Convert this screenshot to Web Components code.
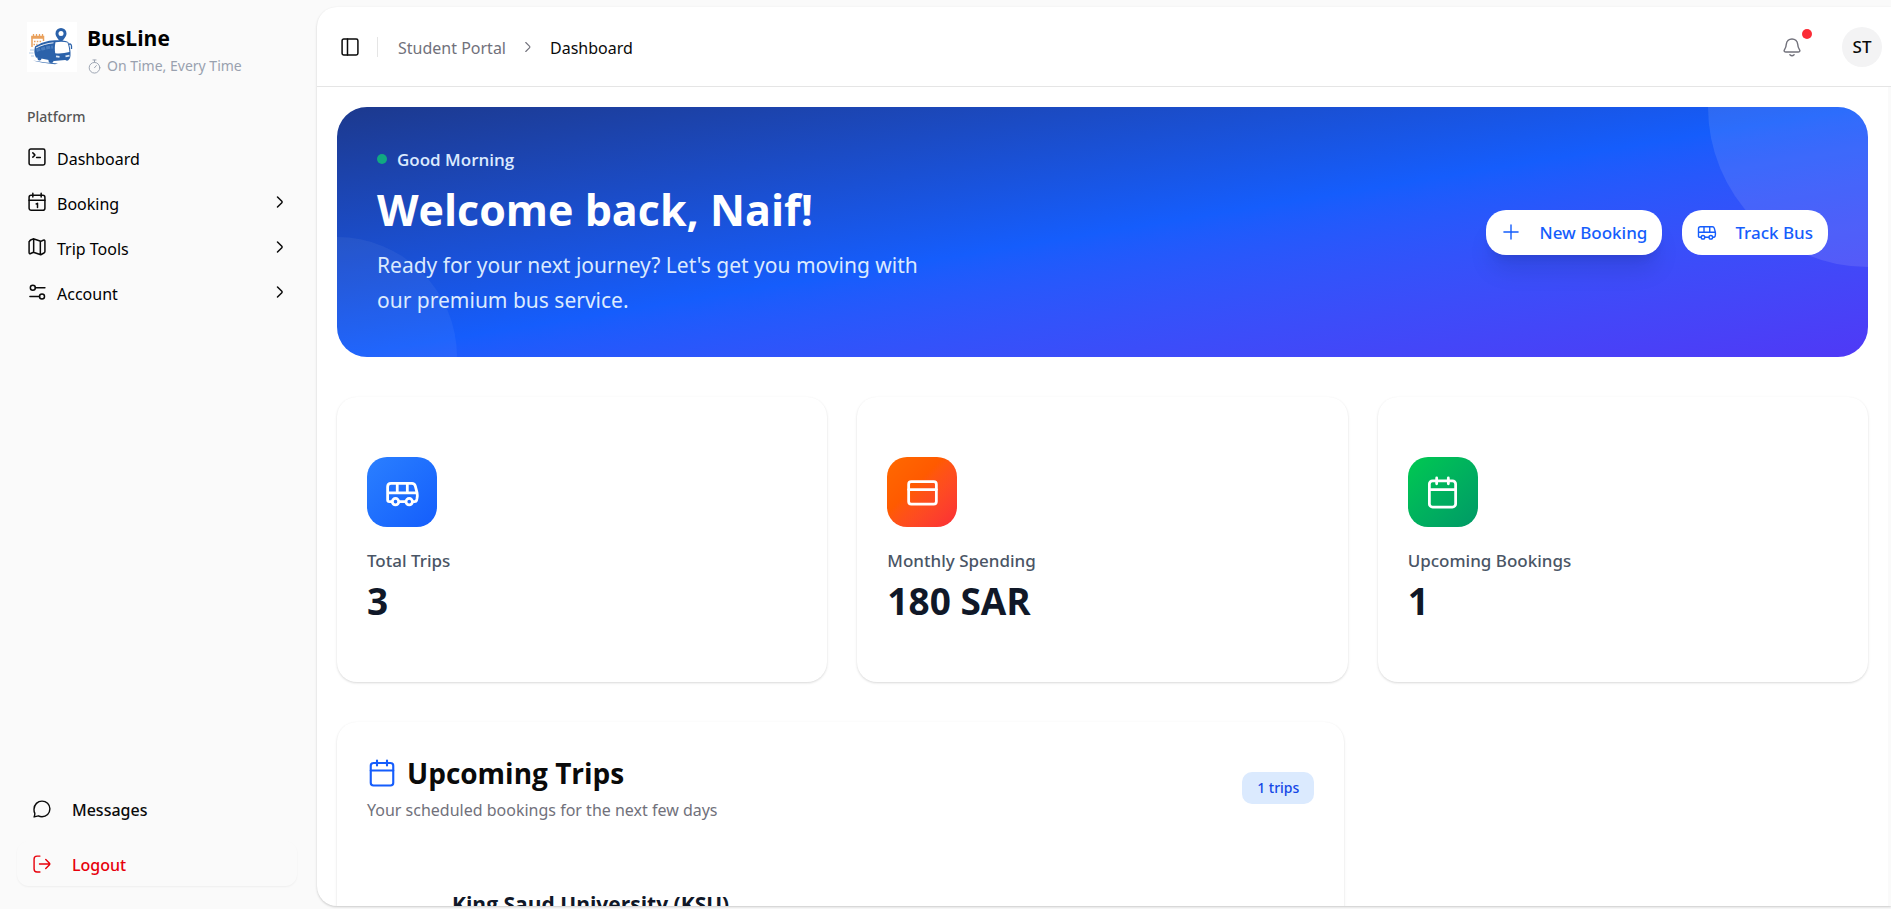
<!DOCTYPE html>
<html lang="en">
<head>
<meta charset="utf-8">
<title>BusLine – Dashboard</title>
<style>
  html, body { margin: 0; height: 100%; }
  body {
    background: #fafafa;
    color: #0a0a0a;
    font: 400 16px/24px "Noto Sans", "Open Sans", sans-serif;
    --medium: "Noto Sans", "Open Sans", sans-serif;
    --strong: "Open Sans", "Noto Sans", sans-serif;
    overflow: hidden;
  }
</style>
</head>
<body>
<bus-app>
  <bus-sidebar slot="sidebar">
    <bus-brand slot="brand" tagline="On Time, Every Time">BusLine</bus-brand>
    <nav-item icon="terminal">Dashboard</nav-item>
    <nav-item icon="calendarDay" expandable>Booking</nav-item>
    <nav-item icon="map" expandable>Trip Tools</nav-item>
    <nav-item icon="sliders" expandable>Account</nav-item>
    <side-action slot="footer" icon="chat">Messages</side-action>
    <side-action slot="footer" icon="logout" danger>Logout</side-action>
  </bus-sidebar>
  <bus-topbar slot="topbar" parent="Student Portal" page="Dashboard" initials="ST"></bus-topbar>
  <welcome-banner>
    <span slot="greeting">Good Morning</span>
    <span slot="title">Welcome back, Naif!</span>
    <span slot="text">Ready for your next journey? Let's get you moving with our premium bus service.</span>
    <pill-button slot="actions" icon="plus" raised>New Booking</pill-button>
    <pill-button slot="actions" icon="bus">Track Bus</pill-button>
  </welcome-banner>
  <stat-grid>
    <stat-card icon="bus" tone="blue" label="Total Trips">3</stat-card>
    <stat-card icon="card" tone="orange" label="Monthly Spending">180 SAR</stat-card>
    <stat-card icon="calendar" tone="green" label="Upcoming Bookings">1</stat-card>
  </stat-grid>
  <trips-card>
    <span slot="title">Upcoming Trips</span>
    <span slot="text">Your scheduled bookings for the next few days</span>
    <span slot="badge">1 trips</span>
    <trip-row>King Saud University (KSU)</trip-row>
  </trips-card>
</bus-app>

<script>
const ICONS = {
  terminal: '<rect x="2.5" y="2.5" width="19" height="19" rx="2"/><path d="M7 7l2.2 2.1c.5.5.5.6 0 1.1L7 12.200M11.500 12.500H16"/>',
  calendarDay: '<rect x="2.500" y="4" width="19" height="18" rx="2.500"/><path d="M2.500 10h19M7 1.500V6M17 1.500V6M11 14.300c.8-.2 1.200-.5 1.600-.8V18.500"/>',
  calendar: '<rect x="3" y="4" width="18" height="18" rx="2.200"/><path d="M3 10h18M8 2v4M16 2v4"/>',
  map: '<path d="M3 5.500c0-1 .5-1.400 1.400-1.900L7.500 2.200l9 3 3-1.300c1.300-.5 2-.1 2 1.200v12.200c0 1-.4 1.500-1.200 1.900l-3.800 2.100-8.800-3-3.300 1.500c-1.200.6-1.900.1-1.900-1.200V5.500zM8 2.500v15.500M16 5.300V21"/>',
  sliders: '<circle cx="7" cy="7" r="3"/><circle cx="18" cy="17.500" r="3"/><path d="M10 7h11.500M3.500 17.500H15"/>',
  chevron: '<path d="M9 6l5.200 5.200c.6.6.6 1 0 1.600L9 18"/>',
  chat: '<path d="M2.500 21.500c.6-1.400 1-2.700.9-4.200-.7-1.500-1.100-3.200-1-5.100C2.600 6.600 6.800 2.500 12 2.500s9.500 4.200 9.500 9.300c0 5.300-4.200 9.400-9.500 9.400-1.600 0-3-.3-4.300-1-1.800.2-3.400.6-5.200 1.300z"/>',
  logout: '<path d="M9.500 2.500H6C3.500 2.500 2.500 3.600 2.500 6v12c0 2.400 1 3.500 3.500 3.500h3.500M9 12h12.500M16.500 6.500l4.500 4.700c.5.500.5 1.100 0 1.600l-4.500 4.700"/>',
  panel: '<rect x="2.500" y="2.500" width="19" height="19" rx="2"/><path d="M9 2.500v19"/>',
  bell: '<path d="M4.700 18h14.600c1.700 0 2.700-1.200 1.800-2.600-1.500-2.100-2.100-3-2.300-6.900C18.500 4.700 15.500 2.300 12 2.300S5.500 4.700 5.200 8.500c-.2 3.900-.8 4.800-2.300 6.900C2 16.800 3 18 4.700 18zM9.500 21.300c1.300 1.200 3.700 1.200 5 0"/>',
  plus: '<path d="M12 3.500v17M3.500 12h17"/>',
  bus: '<path d="M4.700 18.300H3c-.9 0-1.200-.3-1.200-1.200V8c0-1.700.6-2.300 2.300-2.300h14.400c1.400 0 1.900.5 2.300 1.900l1.200 4.600c.3 1.500.2 2.600-.1 4.100l-.3 1.200c-.2.600-.5.800-1.100.8h-1.400M9.700 18.300h4.400M1.800 12.200h20.200M8.400 5.700v6.500M15.300 5.700v6.500"/><circle cx="7.200" cy="18.300" r="2.200"/><circle cx="16.600" cy="18.300" r="2.200"/>',
  card: '<rect x="2.500" y="4.500" width="19" height="15.500" rx="1.800"/><path d="M2.500 10h19"/>',
  timer: '<circle cx="12" cy="14" r="8.500"/><path d="M12 14l3-3.500M9.500 1.500h5M12 2v3"/>'
};

const icon = (name, size, weight = 1.5) =>
  `<svg width="${size}" height="${size}" viewBox="0 0 24 24" fill="none" stroke="currentColor" stroke-width="${weight}" stroke-linecap="round" stroke-linejoin="round" aria-hidden="true">${ICONS[name]}</svg>`;

const define = (tag, render) => customElements.define(tag, class extends HTMLElement {
  connectedCallback() {
    if (this.shadowRoot) return;
    const root = this.attachShadow({ mode: 'open' });
    root.innerHTML = '<style>*{box-sizing:border-box}svg{display:block;flex:none}button,a{font:inherit;color:inherit;text-decoration:none}</style>' + render(this);
  }
});

define('bus-app', () => `
<style>
  :host { display: grid; grid-template-columns: 317px minmax(0, 1fr); height: 100vh; }
  .panel { margin: 7px 0 3px; background: #fff; border-radius: 20px 0 0 20px; overflow: hidden;
    display: flex; flex-direction: column; min-height: 0;
    box-shadow: 0 1px 3px rgba(0,0,0,.1), 0 1px 2px rgba(0,0,0,.1); }
  .scroll { flex: 1; min-height: 0; overflow: hidden; padding: 20px; border-right: 3px solid #fafafa;
    display: flex; flex-direction: column; gap: 40px; }
  ::slotted(*) { flex: none; }
</style>
<slot name="sidebar"></slot>
<main class="panel">
  <slot name="topbar"></slot>
  <div class="scroll"><slot></slot></div>
</main>`);

define('bus-sidebar', () => `
<style>
  :host { display: flex; flex-direction: column; padding: 22px 20px 23px 17px; box-sizing: border-box; min-height: 0; }
  .label { font: 500 14px/40px var(--medium); color: #555; padding-left: 10px; margin-top: 25px; }
  nav { display: flex; flex-direction: column; gap: 5px; }
  .foot { margin-top: auto; display: flex; flex-direction: column; gap: 10px; }
</style>
<slot name="brand"></slot>
<div class="label">Platform</div>
<nav aria-label="Platform"><slot></slot></nav>
<div class="foot"><slot name="footer"></slot></div>`);

define('bus-brand', el => `
<style>
  :host { display: flex; gap: 10px; height: 50px; padding-left: 10px; }
  .logo { width: 50px; height: 50px; background: #fff; }
  .name { font: 700 21px/32px var(--strong); color: #000; }
  .tag { display: flex; align-items: center; gap: 5px; font-size: 14px; line-height: 24px; color: #99a1af; }
</style>
<svg class="logo" viewBox="0 0 50 50" aria-hidden="true">
  <g stroke="#e9a15c" fill="none">
    <path d="M5 25V14.500h11.500V19" stroke-width="1.500"/><path d="M4.500 15.500h12" stroke-width="2.500"/>
    <path d="M6.500 12v3M9.500 12v3M12.500 12v3M15.500 12v3" stroke-width="1.300"/>
    <path d="M7 19.500h8M6.500 22.500h4" stroke-width="1.500" stroke-dasharray="1.500 1.300"/>
  </g>
  <g fill="#2b62aa">
    <path d="M34 21c-2-3.500-5.500-6-5.500-9.500a5.500 5.500 0 0 1 11 0c0 3.500-3.500 6-5.500 9.500z"/>
    <path d="M8 24.500C13 21 20 18.500 28 18.200c5-.2 11.500.3 13.200 1.800 1.800 4.200 2.600 9 2.300 13.500-.2 2.800-.9 4-2.500 4.300L27 39 9 35.500C7 32 7 28 8 24.500z"/>
    <circle cx="12.500" cy="36.500" r="2"/><circle cx="24" cy="38.500" r="2.500"/><circle cx="40" cy="37" r="1.800"/>
    <path d="M6 38.500c8 1.500 17 2.500 25 3l-3 .8C20 41.500 12 40.300 6 38.500z"/>
  </g>
  <path d="M41.500 22.500c1.500-1 2.800-.5 3 1.500v3" fill="none" stroke="#2b62aa" stroke-width="1.300"/>
  <circle cx="34" cy="11.500" r="2.500" fill="#fff"/>
  <path d="M28.500 20.200c4-.8 8.500-.8 12 .3 1 2.800 1.700 6 1.900 9.500-4.700 1.300-9.800 1.700-14.200 1.200-.6-3.700-.5-7.200.3-11z" fill="#fff"/>
  <path d="M9 26c5-2.800 11.500-4.700 17.500-5.200" fill="none" stroke="#fff" stroke-width=".9"/>
  <path d="M9.500 28.500c5-1.700 11-3 16.500-3.500" fill="none" stroke="#4b7dbd" stroke-width="3" stroke-dasharray="4 1"/>
  <path d="M29 34.300l3.500.5M38.500 34.300l4-.7" stroke="#dce8f6" stroke-width="1.800"/>
  <path d="M3 28h4M2 31h4.500M4 34h3" stroke="#9dbde0" stroke-width=".8"/>
</svg>
<div>
  <div class="name"><slot></slot></div>
  <div class="tag">${icon('timer', 15)}<span>${el.getAttribute('tagline')}</span></div>
</div>`);

define('nav-item', el => `
<style>
  :host { display: block; }
  a { display: flex; align-items: center; height: 40px; padding: 0 7px 0 10px; }
  .text { flex: 1; padding: 3px 0 0 10px; color: #000; }
</style>
<a href="#">${icon(el.getAttribute('icon'), 20, 1.8)}<span class="text"><slot></slot></span>${el.hasAttribute('expandable') ? icon('chevron', 20, 1.8) : ''}</a>`);

define('side-action', el => `
<style>
  :host { display: block; }
  button { display: flex; align-items: center; gap: 20px; width: 100%; height: 45px; padding: 0 15px;
    border: 0; border-radius: 12px; background: none; font: 500 16px/24px var(--medium); text-align: left; }
  .text { padding-top: 2px; }
  :host([danger]) button { color: #e7000b; box-shadow: 0 1px 2px rgba(0,0,0,.05); }
</style>
<button type="button">${icon(el.getAttribute('icon'), 20, 1.7)}<span class="text"><slot></slot></span></button>`);

define('bus-topbar', el => `
<style>
  :host { display: flex; align-items: center; height: 80px; padding: 0 9px 0 20px; box-sizing: border-box; border-bottom: 1px solid #e5e5e5; }
  button { border: 0; background: none; padding: 0; }
  .toggle { padding: 3px; }
  .rule { width: 1px; height: 20px; background: #e5e5e5; margin: 0 20px 0 14px; }
  ol { display: flex; align-items: center; gap: 13px; margin: 0; padding: 0; list-style: none; flex: 1; color: #71717b; }
  ol a, ol [aria-current] { display: block; padding-top: 2px; }
  ol [aria-current] { color: #0a0a0a; }
  .bell { position: relative; color: #71717b; padding: 10px; margin-right: 30px; }
  .dot { position: absolute; top: 2px; right: 0; width: 10px; height: 10px; border-radius: 50%; background: #fb2c36; }
  .avatar { width: 40px; height: 40px; border-radius: 50%; background: #f3f3f4; font: 500 17px/40px var(--medium); text-align: center; }
</style>
<button class="toggle" type="button" aria-label="Toggle sidebar">${icon('panel', 20, 1.8)}</button>
<span class="rule"></span>
<ol>
  <li><a href="#">${el.getAttribute('parent')}</a></li>
  <li aria-hidden="true">${icon('chevron', 18)}</li>
  <li aria-current="page">${el.getAttribute('page')}</li>
</ol>
<button class="bell" type="button" aria-label="Notifications">${icon('bell', 20, 1.7)}<span class="dot"></span></button>
<button class="avatar" type="button">${el.getAttribute('initials')}</button>`);

define('welcome-banner', () => `
<style>
  :host { display: flex; align-items: center; justify-content: space-between; position: relative; overflow: hidden;
    min-height: 250px; padding: 30px 40px; box-sizing: border-box; border-radius: 30px;
    background: linear-gradient(to bottom right in oklab, #1c398e, #155dfc, #4f39f6); }
  :host::before, :host::after { content: ""; position: absolute; border-radius: 50%; }
  :host::before { width: 320px; height: 320px; top: -160px; right: -160px; background: rgba(255,255,255,.1); }
  :host::after { width: 240px; height: 240px; bottom: -120px; left: -120px; background: rgba(255,255,255,.05); }
  .copy, .actions { position: relative; z-index: 1; }
  .copy { max-width: 560px; }
  .greet { display: flex; align-items: center; gap: 10px; font: 600 17px/25px var(--strong); color: #dbeafe; }
  .greet::before { content: ""; width: 10px; height: 10px; border-radius: 50%; background: #11a981; }
  h1 { margin: 10px 0; font: 700 43px/55px var(--strong); color: #fff; }
  p { margin: 0; padding-top: 1px; font-size: 21px; line-height: 35px; color: #dbeafe; }
  .actions { display: flex; gap: 20px; }
</style>
<div class="copy">
  <div class="greet"><slot name="greeting"></slot></div>
  <h1><slot name="title"></slot></h1>
  <p><slot name="text"></slot></p>
</div>
<div class="actions"><slot name="actions"></slot></div>`);

define('pill-button', el => `
<style>
  :host { display: block; }
  button { display: flex; align-items: center; gap: 18px; height: 45px; padding: 0 15px; border: 0; border-radius: 20px;
    background: #fff; color: #155dfc; font: 500 17px/24px var(--medium); }
  .text { padding-top: 2px; }
  :host([raised]) button { box-shadow: 0 20px 25px -5px rgba(0,0,0,.1), 0 8px 10px -6px rgba(0,0,0,.1); }
</style>
<button type="button">${icon(el.getAttribute('icon'), 20, 1.7)}<span class="text"><slot></slot></span></button>`);

define('stat-grid', () => `
<style>:host { display: grid; grid-template-columns: repeat(3, minmax(0, 1fr)); gap: 30px; }</style><slot></slot>`);

define('stat-card', el => `
<style>
  :host { display: block; padding: 60px 30px 58px; border-radius: 20px; background: #fff;
    box-shadow: 0 1px 3px rgba(0,0,0,.1), 0 1px 2px rgba(0,0,0,.06); }
  .tile { width: 70px; height: 70px; border-radius: 20px; color: #fff; display: grid; place-items: center; margin-bottom: 20px; }
  .blue { background: linear-gradient(to bottom right in oklab, #2b7fff, #155dfc); }
  .orange { background: linear-gradient(to bottom right in oklab, #ff6900, #ff5a00 40%, #fb2c36); }
  .green { background: linear-gradient(to bottom right in oklab, #00c950, #009966); }
  .label { font: 500 17px/27px var(--medium); color: #4a5565; margin-bottom: 3px; }
  .value { font: 700 37px/47px var(--strong); color: #101828; }
</style>
<div class="tile ${el.getAttribute('tone')}">${icon(el.getAttribute('icon'), 35, 1.9)}</div>
<div class="label">${el.getAttribute('label')}</div>
<div class="value"><slot></slot></div>`);

define('trips-card', () => `
<style>
  :host { display: block; width: calc((100% - 80px) / 3 * 2 + 40px); padding: 30px; box-sizing: border-box; border-radius: 20px; background: #fff;
    box-shadow: 0 1px 3px rgba(0,0,0,.1), 0 1px 2px rgba(0,0,0,.06); }
  header { display: flex; align-items: center; justify-content: space-between; }
  h2 { display: flex; align-items: center; gap: 10px; margin: 0; font: 700 28px/42px var(--strong); }
  h2 svg { color: #155dfc; }
  p { margin: 4px 0 0; line-height: 25px; color: #71717b; }
  .badge { padding: 0 15px; border-radius: 10px; background: #dbeafe; color: #1447e6; font: 500 14px/32px var(--medium); }
  .list { margin-top: 66px; }
</style>
<header>
  <div>
    <h2>${icon('calendar', 30, 1.7)}<slot name="title"></slot></h2>
    <p><slot name="text"></slot></p>
  </div>
  <span class="badge"><slot name="badge"></slot></span>
</header>
<div class="list"><slot></slot></div>`);

define('trip-row', () => `
<style>
  :host { display: block; padding-left: 85px; }
  h3 { margin: 0; font: 700 21px/30px var(--strong); color: #101828; }
</style>
<h3><slot></slot></h3>`);
</script>
</body>
</html>
